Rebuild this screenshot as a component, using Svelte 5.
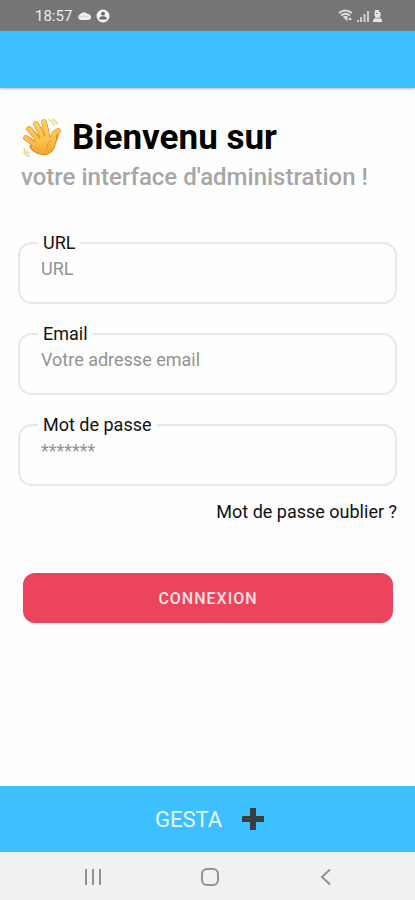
<script lang="ts">
    const fields = [
        { id: "url", label: "URL", type: "text", placeholder: "URL" },
        { id: "email", label: "Email", type: "email", placeholder: "Votre adresse email" },
        { id: "password", label: "Mot de passe", type: "password", placeholder: "*******" }
    ];

    // fingers of the waving hand, pinky to thumb
    const fingers = [
        "M4 20 L16 28",
        "M7 11 L19 24",
        "M14 6 L22 21",
        "M22 4 L26 20",
        "M36 13 C31 15 31 19 30 24"
    ];
</script>

<div class="screen">
    <div class="status">
        <span class="time">18:57</span>
        <svg class="cloud" viewBox="0 0 14 8" aria-hidden="true">
            <path fill="#eee" d="M3 8 A3 3 0 0 1 2.5 2.8 A5 5 0 0 1 10.5 2 A3 3 0 0 1 11.5 8 Z" />
            <path stroke="#ccc" stroke-width=".7" fill="none" d="M2 5 Q7 2.5 12 5.2" />
        </svg>
        <svg class="badge" viewBox="0 0 14 14" aria-hidden="true">
            <circle cx="7" cy="7" r="6.5" fill="#f4f4f4" />
            <circle cx="7" cy="4.7" r="1.9" fill="#666" />
            <path fill="#666" d="M3.5 10.5 V9 Q3.5 7.2 7 7.2 T10.5 9 V10.5 Z" />
        </svg>
        <svg class="signals" viewBox="0 0 46 16" aria-hidden="true">
            <g fill="none" stroke="#ddd" stroke-width="2">
                <path d="M1 5 Q7 0 14 5" />
                <path d="M3 7.5 Q7.5 4 12 7.5" />
                <path d="M5.5 9.5 Q7.5 8 9.5 9.5" />
            </g>
            <path fill="#ddd" d="M6 10 H9.5 L9 13 Z M12 9 L14 12 H10 Z" />
            <path fill="#ccc" d="M19 12 H21 V14 H19 Z M22 9 H24 V14 H22 Z M25.5 6 H27.5 V14 H25.5 Z M29 3 H31 V14 H29 Z" />
            <path fill="#e4e4e4" d="M37 2 H41 V4 H42.5 V8 L41.5 9 L44 12 V14 H35 V12 L38 9 L36.5 8 V4 H37 Z" />
            <path fill="none" stroke="#888" d="M38 5.5 H40 M38.5 11 L40 9.5 L41.5 11" />
        </svg>
    </div>

    <header></header>

    <main>
        <h1>
            <svg class="hand" viewBox="0 0 40 40" aria-hidden="true">
                <defs>
                    <linearGradient id="skin" x1="0" y1="0" x2="0" y2="40" gradientUnits="userSpaceOnUse">
                        <stop offset="0" stop-color="#ffd15c" />
                        <stop offset=".6" stop-color="#fcbf45" />
                        <stop offset="1" stop-color="#f09a2c" />
                    </linearGradient>
                </defs>
                <g fill="none" stroke-linecap="round">
                    <g stroke="#dc8d2b" stroke-width="5.6">
                        {#each fingers as d}
                            <path {d} />
                        {/each}
                    </g>
                    <path fill="#dc8d2b" d="M10 25 Q15 15 26 18 L31 22 L38 13 Q36 21 33.5 27 C32 34 26 38 20 37 C14 36 9 33 7 28 Z" />
                    <g stroke="url(#skin)" stroke-width="4.4">
                        {#each fingers as d}
                            <path {d} />
                        {/each}
                    </g>
                    <path fill="url(#skin)" d="M11 25 Q16 17 26 18 L30 22 L34 18 Q34 23 32.5 27 C31 33 26 37 20 36 C15 35 10 32 9 28 Z" />
                    <g stroke="#df922e" stroke-width="1">
                        <path d="M7 19 L13 24 M12 13 L18 21 M19 9 L22.5 18" />
                        <path d="M29 23 Q24 25 25 31" />
                    </g>
                    <g stroke="#e9dc9b" stroke-width="1.8">
                        <path d="M27 2 Q31 3 32 7 M31 1 Q34 3 35 6" />
                        <path d="M2 30 Q3 34 7 35 M2 34 Q4 38 7 38" />
                    </g>
                </g>
            </svg>
            Bienvenu sur
        </h1>
        <p class="subtitle">votre interface d'administration !</p>

        <form onsubmit={(e) => e.preventDefault()}>
            {#each fields as f}
                <fieldset>
                    <legend><label for={f.id}>{f.label}</label></legend>
                    <input id={f.id} type={f.type} placeholder={f.placeholder} />
                </fieldset>
            {/each}
            <a class="forgot" href="#oublier">Mot de passe oublier ?</a>
            <button class="login" type="submit">CONNEXION</button>
        </form>
    </main>

    <footer>
        <span>GESTA</span>
        <svg viewBox="0 0 22 22" aria-hidden="true">
            <path fill="#383d41" d="M8 0 H14 V8 H22 V14 H14 V22 H8 V14 H0 V8 H8 Z" />
        </svg>
    </footer>

    <nav>
        <button aria-label="Applications récentes">
            <svg viewBox="0 0 18 18"><path d="M2 1 V17 M9 1 V17 M16 1 V17" /></svg>
        </button>
        <button aria-label="Accueil">
            <svg viewBox="0 0 18 18"><rect x="1" y="1" width="16" height="16" rx="5" /></svg>
        </button>
        <button aria-label="Retour">
            <svg viewBox="0 0 18 18"><path d="M13 1.5 L5 9 L13 16.5" /></svg>
        </button>
    </nav>
</div>

<style>
    :global(body) {
        margin: 0;
        background: #fefefe;
    }

    .screen {
        min-height: 100vh;
        display: flex;
        flex-direction: column;
        font-family: Roboto, "Liberation Sans", sans-serif;
        color: #111;
    }

    .status {
        display: flex;
        align-items: center;
        height: 31px;
        padding: 0 31px 0 35px;
        background: #757575;
        color: #eee;
        font-size: 15px;
    }

    .cloud {
        width: 14px;
        height: 8px;
        margin: 0 5px;
    }

    .badge {
        width: 14px;
        height: 14px;
    }

    .signals {
        width: 46px;
        height: 16px;
        margin-left: auto;
    }

    header {
        height: 57px;
        background: #3ebfff;
        box-shadow: 0 1px 2px #bbb;
    }

    main {
        padding: 30px 18px;
    }

    h1 {
        display: flex;
        align-items: center;
        gap: 10px;
        margin: 0;
        padding: 0 4px;
        font-size: 35px;
        line-height: 40px;
        font-weight: 700;
        color: #000;
    }

    .hand {
        width: 40px;
        height: 40px;
    }

    .subtitle {
        margin: 4px 0 40px;
        padding: 0 3px;
        font-size: 24px;
        line-height: 30px;
        font-weight: 500;
        color: #a6a6a6;
    }

    form {
        display: flex;
        flex-direction: column;
    }

    fieldset {
        min-width: 0;
        margin: 0 0 19px;
        padding: 0 18px 20px;
        border: 2px solid #e8e8e8;
        border-radius: 14px;
    }

    fieldset:last-of-type {
        margin-bottom: 15px;
    }

    legend {
        padding: 0 5px;
        font-size: 18px;
        line-height: 22px;
    }

    input {
        display: block;
        width: 100%;
        height: 28px;
        padding: 0 3px;
        border: 0;
        outline: none;
        background: none;
        box-sizing: border-box;
        font: inherit;
        font-size: 18px;
    }

    input::placeholder {
        color: #929292;
    }

    .forgot {
        align-self: flex-end;
        color: inherit;
        font-size: 18px;
        line-height: 22px;
        text-decoration: none;
    }

    .login {
        height: 50px;
        margin: 50px 4px 0 5px;
        border: 0;
        border-radius: 12px;
        background: #ec445c;
        color: #fbe3e3;
        font: inherit;
        font-size: 16px;
        font-weight: 500;
        letter-spacing: 1px;
    }

    footer {
        display: flex;
        align-items: center;
        justify-content: center;
        gap: 20px;
        height: 66px;
        margin-top: auto;
        padding-left: 4px;
        background: #3ebfff;
        color: #e9f9ff;
        font-size: 22px;
    }

    footer svg {
        width: 22px;
        height: 22px;
    }

    nav {
        display: flex;
        align-items: center;
        justify-content: space-between;
        height: 48px;
        padding: 2px 76px 0 80px;
        background: #f1f1f1;
        box-sizing: border-box;
    }

    nav button {
        display: flex;
        padding: 4px;
        border: 0;
        background: none;
    }

    nav svg {
        width: 18px;
        height: 18px;
        fill: none;
        stroke: #929292;
        stroke-width: 2;
    }
</style>
